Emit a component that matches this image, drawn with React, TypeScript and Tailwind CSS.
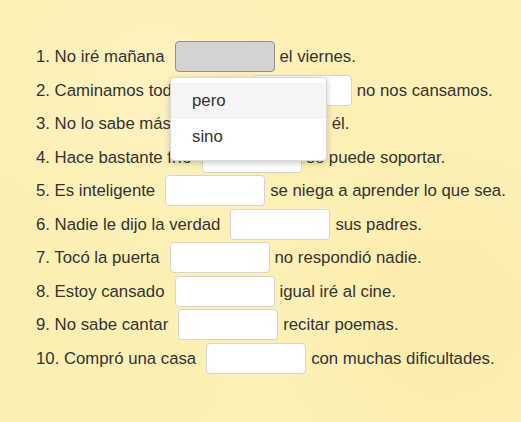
import React from "react";

type Row = { before: string; after: string };

const rows: Row[] = [
  { before: "1. No iré mañana", after: "el viernes." },
  { before: "2. Caminamos toda la tarde", after: "no nos cansamos." },
  { before: "3. No lo sabe más nadie", after: "él." },
  { before: "4. Hace bastante frío", after: "se puede soportar." },
  { before: "5. Es inteligente", after: "se niega a aprender lo que sea." },
  { before: "6. Nadie le dijo la verdad", after: "sus padres." },
  { before: "7. Tocó la puerta", after: "no respondió nadie." },
  { before: "8. Estoy cansado", after: "igual iré al cine." },
  { before: "9. No sabe cantar", after: "recitar poemas." },
  { before: "10. Compró una casa", after: "con muchas dificultades." },
];

function Blank({ active }: { active?: boolean }) {
  return (
    <div
      className={
        active
          ? "ml-[10px] mr-[5px] h-[31px] w-[100px] shrink-0 rounded-[4px] border border-[#8f8f8f] bg-[#d3d3d3]"
          : "ml-[10px] mr-[5px] h-[31px] w-[100px] shrink-0 rounded-[4px] border border-[#d4d4d4] bg-white"
      }
    />
  );
}

export default function App() {
  return (
    <div
      className="relative h-[422px] w-[521px] overflow-hidden bg-[#fdf0b5] bg-[radial-gradient(circle_at_30%_20%,#fdf3c0_0,transparent_35%),radial-gradient(circle_at_85%_75%,#fcecab_0,transparent_30%),radial-gradient(circle_at_10%_80%,#fcefb2_0,transparent_30%)] text-[16.75px] text-[#333]"
      style={{ fontFamily: '"Liberation Sans", Arial, sans-serif' }}
    >
      <div className="flex flex-col pl-[36px] pt-[40px]">
        {rows.map((r, i) => (
          <div key={i} className="flex h-[33.5px] items-center whitespace-nowrap">
            <span>{r.before}</span>
            <Blank active={i === 0} />
            <span>{r.after}</span>
          </div>
        ))}
      </div>

      {/* open select menu */}
      <div className="absolute left-[170px] top-[77px] w-[157px] rounded-[4px] border border-[#d9d9d9] bg-white py-[5px] shadow-[0_2px_6px_rgba(0,0,0,0.22)]">
        <div className="flex h-[36px] items-center bg-[#f5f5f5] pl-[21px]">pero</div>
        <div className="flex h-[36px] items-center pl-[21px]">sino</div>
      </div>
    </div>
  );
}
